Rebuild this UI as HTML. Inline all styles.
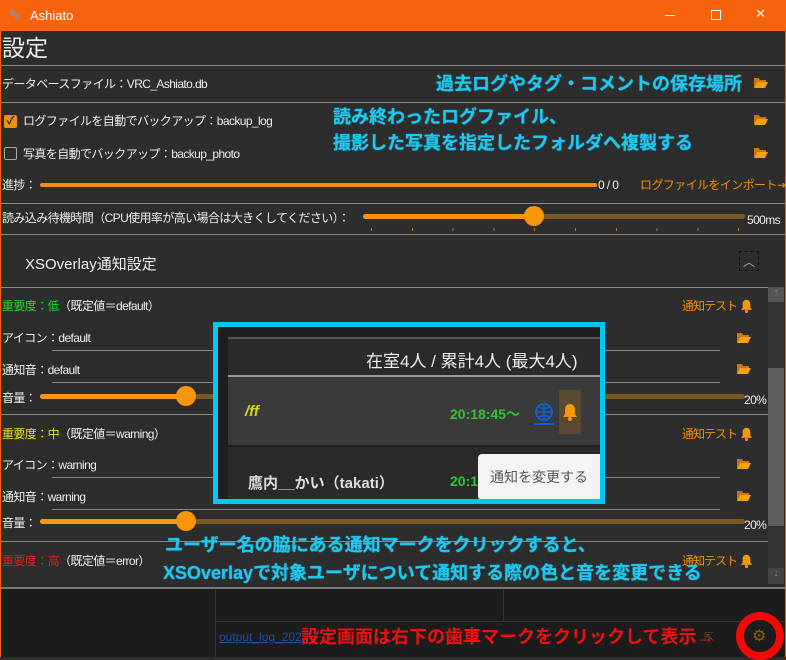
<!DOCTYPE html>
<html><head><meta charset="utf-8"><style>
*{margin:0;padding:0;box-sizing:border-box}
body{width:786px;height:657px;overflow:hidden;background:#2d2d2d;font-family:"Liberation Sans","Noto Sans CJK JP",sans-serif;color:#eee;position:relative}
.a{position:absolute;white-space:nowrap}
.t{font-size:12px;line-height:16px;letter-spacing:-0.6px}
.hl{position:absolute;height:1px;background:#8a8a8a}
.cy{color:#1ec8f0;font-weight:bold;font-size:18px;line-height:22px;text-shadow:0 0 1px #1ec8f0}
.or{color:#f0900c}
.bar{position:absolute;height:5px;border-radius:3px}
.th{position:absolute;width:20px;height:20px;border-radius:50%;background:#f7960c}
</style></head><body>
<div class="a" style="left:0;top:0;width:786px;height:31px;background:#f7630c"></div>
<div class="a" style="left:10px;top:9px;width:5px;height:7px;border-radius:3px;background:#b08070"></div>
<div class="a" style="left:15px;top:13px;width:5px;height:7px;border-radius:3px;background:#b08070"></div>
<div class="a" style="left:30px;top:8px;font-size:13px;color:#fff">Ashiato</div>
<div class="a" style="left:665px;top:15px;width:10px;height:1px;background:#fff"></div>
<div class="a" style="left:711px;top:10px;width:10px;height:10px;border:1px solid #fff"></div>
<div class="a" style="left:755px;top:6px;font-size:13px;color:#fff">✕</div>
<div class="a" style="left:0;top:31px;width:1px;height:626px;background:#f7630c"></div>
<div class="a" style="left:785px;top:31px;width:1px;height:626px;background:#f7630c"></div>

<div class="a" style="left:2px;top:33px;font-size:23px;line-height:30px">設定</div>
<div class="hl" style="left:1px;top:65px;width:784px"></div>
<div class="a t" style="left:2px;top:76px">データベースファイル：VRC_Ashiato.db</div>
<div class="a cy" style="left:436px;top:73px">過去ログやタグ・コメントの保存場所</div>
<div class="hl" style="left:1px;top:102px;width:784px"></div>

<div class="a" style="left:4px;top:115px;width:13px;height:13px;background:#f0900c;border-radius:2px;color:#222;font-size:11px;line-height:13px;text-align:center;font-weight:bold">✓</div>
<div class="a t" style="left:23px;top:113px">ログファイルを自動でバックアップ：backup_log</div>
<div class="a" style="left:4px;top:147px;width:13px;height:13px;border:1px solid #aaa;border-radius:2px"></div>
<div class="a t" style="left:23px;top:146px">写真を自動でバックアップ：backup_photo</div>
<div class="a cy" style="left:333px;top:106px">読み終わったログファイル、</div>
<div class="a cy" style="left:333px;top:132px">撮影した写真を指定したフォルダへ複製する</div>

<div class="a t" style="left:2px;top:177px">進捗：</div>
<div class="bar" style="left:40px;top:183px;width:557px;height:4px;background:#f0900c"></div>
<div class="a t" style="left:598px;top:177px">0 / 0</div>
<div class="a t or" style="left:640px;top:177px">ログファイルをインポート⇥</div>
<div class="hl" style="left:1px;top:203px;width:784px"></div>

<div class="a t" style="left:2px;top:210px">読み込み待機時間（CPU使用率が高い場合は大きくしてください）：</div>
<div class="bar" style="left:363px;top:214px;width:382px;background:#7a5a22"></div>
<div class="bar" style="left:363px;top:214px;width:171px;background:#f7960c"></div>
<div class="th" style="left:524px;top:206px"></div>
<div class="a t" style="left:747px;top:212px">500ms</div>
<div class="a" style="left:371px;top:228px;width:380px;height:3px;background:repeating-linear-gradient(90deg,#c07a10 0 1px,transparent 1px 40.8px)"></div>
<div class="hl" style="left:1px;top:234px;width:784px"></div>

<div class="a" style="left:25px;top:253px;font-size:15px">XSOverlay通知設定</div>
<div class="a" style="left:739px;top:251px;width:20px;height:20px;border:1px dashed #111;color:#aaa;font-size:12px;text-align:center;line-height:20px">︿</div>
<div class="hl" style="left:1px;top:287px;width:767px"></div>

<div class="a" style="left:768px;top:287px;width:16px;height:297px;background:#333"></div>
<div class="a" style="left:768px;top:287px;width:16px;height:15px;background:#555;color:#888;font-size:10px;text-align:center">↑</div>
<div class="a" style="left:768px;top:368px;width:16px;height:158px;background:#5e5e5e"></div>
<div class="a" style="left:768px;top:568px;width:16px;height:16px;background:#444;color:#888;font-size:10px;text-align:center">↓</div>

<div class="a t" style="left:2px;top:298px"><span style="color:#2ed02e">重要度：低</span>（既定値＝default）</div>
<div class="a t or" style="left:682px;top:298px;letter-spacing:-1px">通知テスト</div>
<div class="a t" style="left:2px;top:330px">アイコン：default</div><div class="hl" style="left:52px;top:350px;width:668px"></div>
<div class="a t" style="left:2px;top:362px">通知音：default</div><div class="hl" style="left:52px;top:382px;width:668px"></div>
<div class="a t" style="left:2px;top:390px">音量：</div>
<div class="bar" style="left:40px;top:394px;width:705px;background:#7a5a22"></div>
<div class="bar" style="left:40px;top:394px;width:146px;background:#f7960c"></div>
<div class="th" style="left:176px;top:386px"></div>
<div class="a t" style="left:744px;top:392px">20%</div>
<div class="hl" style="left:1px;top:414px;width:767px"></div>

<div class="a t" style="left:2px;top:426px"><span style="color:#e8e020">重要度：中</span>（既定値＝warning）</div>
<div class="a t or" style="left:682px;top:426px;letter-spacing:-1px">通知テスト</div>
<div class="a t" style="left:2px;top:457px">アイコン：warning</div><div class="hl" style="left:52px;top:477px;width:668px"></div>
<div class="a t" style="left:2px;top:489px">通知音：warning</div><div class="hl" style="left:52px;top:509px;width:668px"></div>
<div class="a t" style="left:2px;top:515px">音量：</div>
<div class="bar" style="left:40px;top:519px;width:705px;background:#7a5a22"></div>
<div class="bar" style="left:40px;top:519px;width:146px;background:#f7960c"></div>
<div class="th" style="left:176px;top:511px"></div>
<div class="a t" style="left:744px;top:517px">20%</div>
<div class="hl" style="left:1px;top:541px;width:767px"></div>

<div class="a t" style="left:2px;top:553px"><span style="color:#e02020">重要度：高</span>（既定値＝error）</div>
<div class="a t or" style="left:682px;top:553px;letter-spacing:-1px">通知テスト</div>
<div class="a cy" style="left:165px;top:534px">ユーザー名の脇にある通知マークをクリックすると、</div>
<div class="a cy" style="left:163px;top:562px">XSOverlayで対象ユーザについて通知する際の色と音を変更できる</div>

<svg class="a" style="left:740px;top:299px" width="13" height="14" viewBox="0 0 16 18"><path d="M8 1c-3 0-5 2.5-5 5.5V11L1 14h14l-2-3V6.5C13 3.5 11 1 8 1z" fill="#f7960c"/><circle cx="8" cy="16" r="2" fill="#f7960c"/></svg>
<svg class="a" style="left:740px;top:427px" width="13" height="14" viewBox="0 0 16 18"><path d="M8 1c-3 0-5 2.5-5 5.5V11L1 14h14l-2-3V6.5C13 3.5 11 1 8 1z" fill="#f7960c"/><circle cx="8" cy="16" r="2" fill="#f7960c"/></svg>
<svg class="a" style="left:740px;top:554px" width="13" height="14" viewBox="0 0 16 18"><path d="M8 1c-3 0-5 2.5-5 5.5V11L1 14h14l-2-3V6.5C13 3.5 11 1 8 1z" fill="#f7960c"/><circle cx="8" cy="16" r="2" fill="#f7960c"/></svg>

<svg class="a" style="left:754px;top:77px" width="14" height="12" viewBox="0 0 14 12"><path d="M0 1h5l1 2h6v2H3L0 11z" fill="#c87808"/><path d="M3 5h11l-3 6H0z" fill="#f7a010"/></svg>
<svg class="a" style="left:754px;top:114px" width="14" height="12" viewBox="0 0 14 12"><path d="M0 1h5l1 2h6v2H3L0 11z" fill="#c87808"/><path d="M3 5h11l-3 6H0z" fill="#f7a010"/></svg>
<svg class="a" style="left:754px;top:147px" width="14" height="12" viewBox="0 0 14 12"><path d="M0 1h5l1 2h6v2H3L0 11z" fill="#c87808"/><path d="M3 5h11l-3 6H0z" fill="#f7a010"/></svg>
<svg class="a" style="left:737px;top:332px" width="14" height="12" viewBox="0 0 14 12"><path d="M0 1h5l1 2h6v2H3L0 11z" fill="#c87808"/><path d="M3 5h11l-3 6H0z" fill="#f7a010"/></svg>
<svg class="a" style="left:737px;top:363px" width="14" height="12" viewBox="0 0 14 12"><path d="M0 1h5l1 2h6v2H3L0 11z" fill="#c87808"/><path d="M3 5h11l-3 6H0z" fill="#f7a010"/></svg>
<svg class="a" style="left:737px;top:458px" width="14" height="12" viewBox="0 0 14 12"><path d="M0 1h5l1 2h6v2H3L0 11z" fill="#c87808"/><path d="M3 5h11l-3 6H0z" fill="#f7a010"/></svg>
<svg class="a" style="left:737px;top:490px" width="14" height="12" viewBox="0 0 14 12"><path d="M0 1h5l1 2h6v2H3L0 11z" fill="#c87808"/><path d="M3 5h11l-3 6H0z" fill="#f7a010"/></svg>

<div class="a" style="left:213px;top:322px;width:392px;height:182px;border:5px solid #00c8f0;background:#1e1e1e;overflow:hidden">
 <div class="a" style="left:10px;top:10px;width:380px;height:38px;background:#2b2b2b;border-top:2px solid #555"></div>
 <div class="a" style="left:148px;top:20px;font-size:17px;color:#eee">在室4人 / 累計4人 (最大4人)</div>
 <div class="a" style="left:10px;top:48px;width:380px;height:2px;background:#999"></div>
 <div class="a" style="left:10px;top:50px;width:380px;height:68px;background:#3a3a3a"></div>
 <div class="a" style="left:27px;top:76px;font-size:15px;font-weight:bold;color:#d8d820;font-style:italic">/ff</div>
 <div class="a" style="left:232px;top:77px;font-size:14px;font-weight:bold;color:#30c830">20:18:45～</div>
 <svg class="a" style="left:316px;top:76px" width="20" height="22" viewBox="0 0 20 22"><circle cx="10" cy="9" r="8" fill="none" stroke="#1060d0" stroke-width="2"/><path d="M2 9h16M10 1v16M5 4c3 2 7 2 10 0M5 14c3-2 7-2 10 0" stroke="#1060d0" stroke-width="1.5" fill="none"/><path d="M0 21h20" stroke="#1060d0" stroke-width="2"/></svg>
 <div class="a" style="left:341px;top:63px;width:22px;height:44px;background:#5a4a30;border-radius:2px"></div>
 <svg class="a" style="left:344px;top:76px" width="16" height="18" viewBox="0 0 16 18"><path d="M8 1c-3 0-5 2.5-5 5.5V11L1 14h14l-2-3V6.5C13 3.5 11 1 8 1z" fill="#f7960c"/><circle cx="8" cy="16" r="2" fill="#f7960c"/></svg>
 <div class="a" style="left:10px;top:120px;width:380px;height:60px;background:#2a2a2a"></div>
 <div class="a" style="left:30px;top:145px;font-size:15px;font-weight:bold;color:#ddd">鷹内__かい（takati）</div>
 <div class="a" style="left:232px;top:146px;font-size:14px;font-weight:bold;color:#30c830">20:1</div>
 <div class="a" style="left:260px;top:127px;width:130px;height:46px;background:#f4f4f4;border-radius:4px;color:#555;font-size:14px;line-height:46px;padding-left:12px">通知を変更する</div>
</div>

<div class="a" style="left:1px;top:587px;width:784px;height:2px;background:#777"></div>
<div class="a" style="left:1px;top:589px;width:784px;height:68px;background:#1c1c1c"></div>
<div class="a" style="left:215px;top:589px;width:1px;height:68px;background:#333"></div>
<div class="a" style="left:503px;top:589px;width:1px;height:32px;background:#333"></div>
<div class="a" style="left:215px;top:621px;width:570px;height:1px;background:#333"></div>
<div class="a" style="left:219px;top:630px;font-size:12px;color:#2050a0;text-decoration:underline">output_log_202</div>
<div class="a" style="left:301px;top:623px;font-size:18px;font-weight:bold;color:#f01010">設定画面は右下の歯車マークをクリックして表示→</div>
<div class="a" style="left:704px;top:630px;font-size:12px;color:#6a5020">⇱</div>
<div class="a" style="left:736px;top:612px;width:48px;height:48px;border-radius:50%;border:8px solid #f00a0a;background:#1c1c1c"></div>
<div class="a" style="left:752px;top:626px;font-size:16px;color:#8a6010">⚙︎</div>
</body></html>
